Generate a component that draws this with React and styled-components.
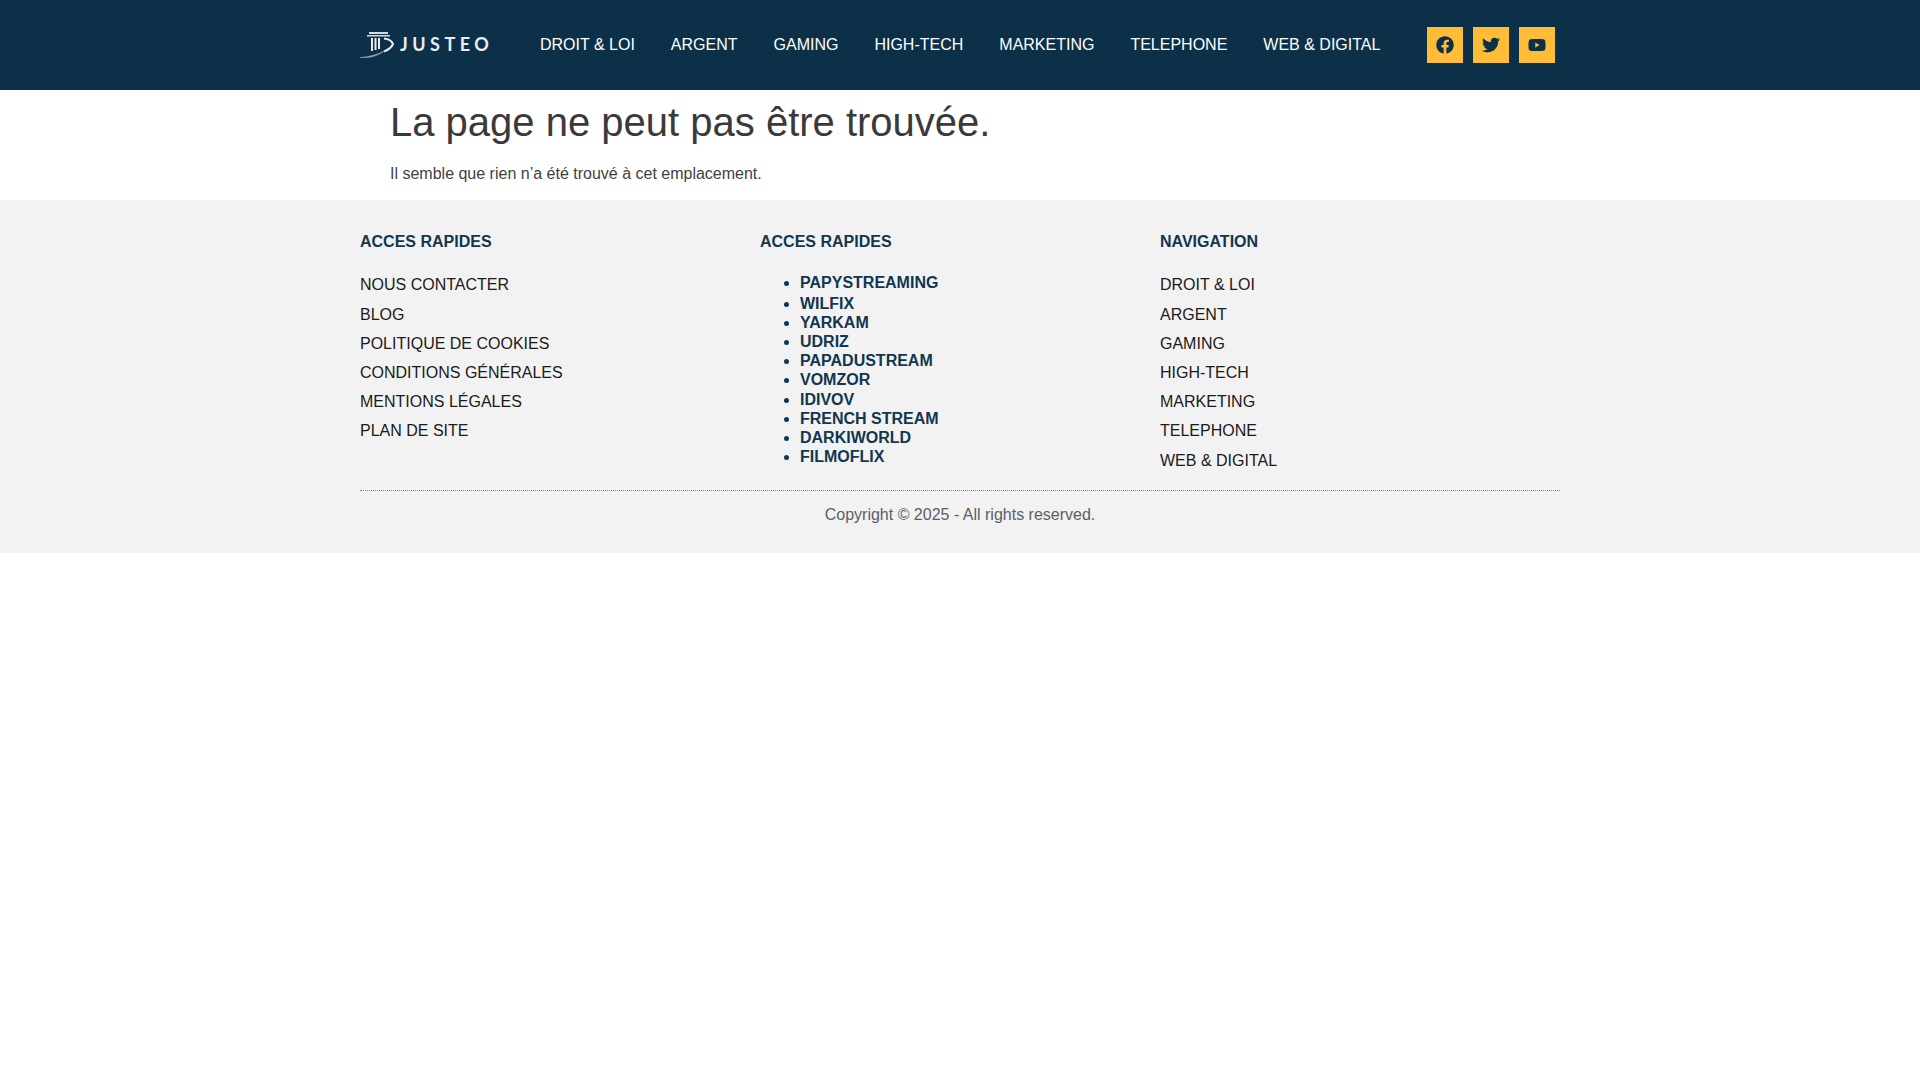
import React from 'react';
import styled, { createGlobalStyle } from 'styled-components';
import { FaFacebook, FaTwitter, FaYoutube } from 'react-icons/fa';

const Global = createGlobalStyle`
  html, body { margin: 0; padding: 0; background: #fff; }
  body { font-family: "Liberation Sans", Arial, sans-serif; font-size: 16px; color: #333; line-height: 1.5; }
  a { text-decoration: none; color: inherit; }
`;

const Header = styled.header`
  background: #0d3049;
  height: 90px;
  display: flex;
  justify-content: center;
`;
const HeaderInner = styled.div`
  width: 1200px;
  display: flex;
  align-items: center;
  height: 90px;
`;
const Logo = styled.a`
  width: 127px;
  flex: none;
  display: flex;
  align-items: center;
  gap: 6px;
  margin-right: 53px;
`;
const LogoSvg = styled.svg`
  flex: none;
  display: block;
`;
const LogoWord = styled.span`
  flex: none;
  font-family: Lato, sans-serif;
  font-weight: 700;
  font-size: 18px;
  line-height: 1;
  letter-spacing: 4.5px;
  color: #e9edf0;
  white-space: nowrap;
  margin-top: -2px;
`;
const Nav = styled.nav`
  display: flex;
  gap: 36px;
  flex: none;
  margin-top: -1px;
`;
const NavLink = styled.a`
  color: #fff;
  font-size: 16px;
  line-height: 24px;
  white-space: nowrap;
  flex: none;
`;
const Socials = styled.div`
  display: flex;
  gap: 10px;
  margin-left: 47px;
`;
const Social = styled.a`
  width: 36px;
  height: 36px;
  background: #ffbc36;
  color: #0d3049;
  display: flex;
  align-items: center;
  justify-content: center;
  font-size: 18px;
`;
const Main = styled.main`
  width: 1140px;
  margin: 0 auto;
  height: 110px;
`;
const Title = styled.h1`
  margin: 0;
  padding-top: 6px;
  font-size: 40px;
  font-weight: 400;
  line-height: 52px;
  color: #3a3a3a;
`;
const Lead = styled.p`
  margin: 14px 0 0;
  font-size: 16px;
  line-height: 24px;
  color: #3f3f3f;
`;
const Footer = styled.footer`
  background: #f2f2f2;
  height: 353px;
  display: flex;
  justify-content: center;
`;
const FooterInner = styled.div`
  width: 1200px;
  padding-top: 30px;
`;
const Columns = styled.div`
  display: grid;
  grid-template-columns: repeat(3, 400px);
  height: 260px;
  border-bottom: 1px dotted #8a8a8a;
`;
const Heading = styled.h3`
  margin: 0 0 19.4px;
  font-size: 16px;
  font-weight: 700;
  line-height: 24px;
  color: #113650;
`;
const LinkList = styled.div`
  display: flex;
  flex-direction: column;
`;
const FooterLink = styled.a`
  color: #1a1a1a;
  font-size: 16px;
  line-height: 24px;
  margin-bottom: 5.2px;
`;
const Bullets = styled.ul`
  margin: 0;
  padding-left: 40px;
  color: #113650;
`;
const Bullet = styled.li`
  font-size: 16px;
  font-weight: 700;
  line-height: 19.2px;
  &:first-child { margin-bottom: 1px; }
`;
const Copyright = styled.p`
  margin: 12px 0 0;
  text-align: center;
  font-size: 16px;
  line-height: 24px;
  color: #5a5f65;
`;

const navItems = ['DROIT & LOI', 'ARGENT', 'GAMING', 'HIGH-TECH', 'MARKETING', 'TELEPHONE', 'WEB & DIGITAL'];
const quick = ['NOUS CONTACTER', 'BLOG', 'POLITIQUE DE COOKIES', 'CONDITIONS GÉNÉRALES', 'MENTIONS LÉGALES', 'PLAN DE SITE'];
const sites = ['PAPYSTREAMING', 'WILFIX', 'YARKAM', 'UDRIZ', 'PAPADUSTREAM', 'VOMZOR', 'IDIVOV', 'FRENCH STREAM', 'DARKIWORLD', 'FILMOFLIX'];

function LogoMark() {
  return (
    <LogoSvg width="34" height="26" viewBox="0 0 34 26" fill="none">
      <path d="M9 0h19v2H9zM7 3h23v1.600H7z" fill="#d5dbe0" />
      <path d="M12 6v13M15.500 6v12M19 6v11" stroke="#e8ecef" strokeWidth="2" />
      <path d="M24 6.500c5 .5 8 3 9 5.500-1.500 3.500-5 6-9 7.500" stroke="#eef1f3" strokeWidth="2" />
      <path d="M0 25.500C9 25 18 22.500 25 18.500 18 24 9 26.500 0 25.500z" fill="#9fadb8" stroke="#9fadb8" strokeWidth=".5" />
    </LogoSvg>
  );
}

export default function App() {
  return (
    <>
      <Global />
      <Header>
        <HeaderInner>
          <Logo href="#">
            <LogoMark />
            <LogoWord>JUSTEO</LogoWord>
          </Logo>
          <Nav>
            {navItems.map((n) => <NavLink key={n} href="#">{n}</NavLink>)}
          </Nav>
          <Socials>
            <Social href="#"><FaFacebook /></Social>
            <Social href="#"><FaTwitter /></Social>
            <Social href="#"><FaYoutube /></Social>
          </Socials>
        </HeaderInner>
      </Header>
      <Main>
        <Title>La page ne peut pas être trouvée.</Title>
        <Lead>Il semble que rien n’a été trouvé à cet emplacement.</Lead>
      </Main>
      <Footer>
        <FooterInner>
          <Columns>
            <div>
              <Heading>ACCES RAPIDES</Heading>
              <LinkList>{quick.map((q) => <FooterLink key={q} href="#">{q}</FooterLink>)}</LinkList>
            </div>
            <div>
              <Heading>ACCES RAPIDES</Heading>
              <Bullets>{sites.map((s) => <Bullet key={s}>{s}</Bullet>)}</Bullets>
            </div>
            <div>
              <Heading>NAVIGATION</Heading>
              <LinkList>{navItems.map((q) => <FooterLink key={q} href="#">{q}</FooterLink>)}</LinkList>
            </div>
          </Columns>
          <Copyright>Copyright © 2025 - All rights reserved.</Copyright>
        </FooterInner>
      </Footer>
    </>
  );
}
